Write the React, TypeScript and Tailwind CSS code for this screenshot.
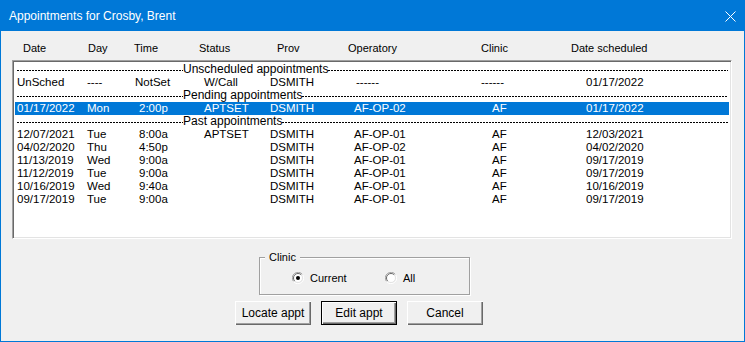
import React from 'react'

type Row = {
  date: string
  day: string
  time: string
  status: string
  prov: string
  op: string
  clinic: string
  sched: string
}

const pending: Row = { date: '01/17/2022', day: 'Mon', time: '2:00p', status: 'APTSET', prov: 'DSMITH', op: 'AF-OP-02', clinic: 'AF', sched: '01/17/2022' }

const past: Row[] = [
  { date: '12/07/2021', day: 'Tue', time: '8:00a', status: 'APTSET', prov: 'DSMITH', op: 'AF-OP-01', clinic: 'AF', sched: '12/03/2021' },
  { date: '04/02/2020', day: 'Thu', time: '4:50p', status: '', prov: 'DSMITH', op: 'AF-OP-02', clinic: 'AF', sched: '04/02/2020' },
  { date: '11/13/2019', day: 'Wed', time: '9:00a', status: '', prov: 'DSMITH', op: 'AF-OP-01', clinic: 'AF', sched: '09/17/2019' },
  { date: '11/12/2019', day: 'Tue', time: '9:00a', status: '', prov: 'DSMITH', op: 'AF-OP-01', clinic: 'AF', sched: '09/17/2019' },
  { date: '10/16/2019', day: 'Wed', time: '9:40a', status: '', prov: 'DSMITH', op: 'AF-OP-01', clinic: 'AF', sched: '10/16/2019' },
  { date: '09/17/2019', day: 'Tue', time: '9:00a', status: '', prov: 'DSMITH', op: 'AF-OP-01', clinic: 'AF', sched: '09/17/2019' },
]

const dashes = 'h-px mt-[7px] bg-[repeating-linear-gradient(to_right,#000_0_2px,transparent_2px_3px)]'

const Separator = ({ label }: { label: string }) => (
  <div className="flex h-[13px] items-start pl-[2px] pr-[1px]">
    <div className={`w-[166px] ${dashes}`} />
    <span className="leading-[13px] text-[12px]">{label}</span>
    <div className={`flex-1 ${dashes}`} />
  </div>
)

const DataRow = ({ row, selected }: { row: Row; selected?: boolean }) => (
  <div className={`flex h-[13px] leading-[13px] whitespace-nowrap pl-[2px] ${selected ? 'bg-[#0078d7] text-white' : ''}`}>
    <span className="w-[70px]">{row.date}</span>
    <span className="w-[52px]">{row.day}</span>
    <span className="w-[65px]">{row.time}</span>
    <span className="w-[66px]">{row.status}</span>
    <span className="w-[84px]">{row.prov}</span>
    <span className="w-[138px]">{row.op}</span>
    <span className="w-[94px]">{row.clinic}</span>
    <span>{row.sched}</span>
  </div>
)

const Radio = ({ checked }: { checked?: boolean }) => (
  <svg width="12" height="12" viewBox="0 0 12 12">
    <path d="M10.5 2.5A5.5 5.5 0 0 0 1.5 9.5" fill="none" stroke="#a0a0a0" />
    <path d="M1.5 9.5A5.5 5.5 0 0 0 10.5 2.5" fill="none" stroke="#ffffff" />
    <circle cx="6" cy="6" r="4.5" fill="#ffffff" />
    <path d="M9.2 2.8A4.5 4.5 0 0 0 2.8 9.2" fill="none" stroke="#696969" />
    <path d="M2.8 9.2A4.5 4.5 0 0 0 9.2 2.8" fill="none" stroke="#e3e3e3" />
    {checked && <circle cx="6" cy="6" r="2" fill="#000" />}
  </svg>
)

const Button = ({ label, isDefault }: { label: string; isDefault?: boolean }) => (
  <button
    className={`w-[76px] h-[24px] bg-[#f0f0f0] text-[12px] text-black ${
      isDefault
        ? 'border border-black shadow-[inset_1px_1px_#fff,inset_-1px_-1px_#696969,inset_-2px_-2px_#a0a0a0]'
        : 'shadow-[inset_1px_1px_#fff,inset_-1px_-1px_#696969,inset_-2px_-2px_#a0a0a0]'
    }`}
  >
    {label}
  </button>
)

export default function App() {
  return (
    <div className="w-[745px] h-[342px] flex flex-col border border-[#0078d7] bg-[#f0f0f0] text-[11px] text-black font-['Liberation_Sans',Arial,sans-serif] overflow-hidden">
      {/* Title bar */}
      <div className="h-[30px] shrink-0 flex items-center justify-between bg-[#0078d7] text-white pl-[8px] pr-[7px]">
        <span className="text-[12px]">Appointments for Crosby, Brent</span>
        <svg width="11" height="11" viewBox="0 0 11 11" className="mr-[1px]">
          <path d="M0.5 0.5L10.5 10.5M10.5 0.5L0.5 10.5" stroke="#fff" strokeWidth="1" />
        </svg>
      </div>

      {/* Column headers */}
      <div className="flex h-[13px] leading-[13px] mt-[11px] pl-[22px] whitespace-nowrap">
        <span className="w-[65px]">Date</span>
        <span className="w-[46px]">Day</span>
        <span className="w-[65px]">Time</span>
        <span className="w-[78px]">Status</span>
        <span className="w-[71px]">Prov</span>
        <span className="w-[133px]">Operatory</span>
        <span className="w-[90px]">Clinic</span>
        <span>Date scheduled</span>
      </div>

      {/* List */}
      <div className="ml-[11px] mt-[5px] w-[720px] h-[179px] bg-white text-[11.5px] border-t border-l border-t-[#a0a0a0] border-l-[#a0a0a0] border-r border-b border-r-white border-b-white shadow-[inset_1px_1px_#696969,inset_-1px_-1px_#e3e3e3] p-[1px]">
        <div className="pt-[1px] pl-[1px] pr-[1px]">
          <Separator label="Unscheduled appointments" />
          <div className="flex h-[13px] leading-[13px] whitespace-nowrap pl-[2px]">
            <span className="w-[70px]">UnSched</span>
            <span className="w-[48px]">----</span>
            <span className="w-[69px]">NotSet</span>
            <span className="w-[66px]">W/Call</span>
            <span className="w-[86px]">DSMITH</span>
            <span className="w-[125px]">------</span>
            <span className="w-[105px]">------</span>
            <span>01/17/2022</span>
          </div>
          <Separator label="Pending appointments" />
          <DataRow row={pending} selected />
          <Separator label="Past appointments" />
          {past.map((r) => (
            <DataRow key={r.date} row={r} />
          ))}
        </div>
      </div>

      {/* Clinic group */}
      <div className="self-start ml-[258px] mt-[18px] w-[211px] h-[38px] border border-[#a0a0a0] shadow-[1px_1px_#fff,inset_1px_1px_#fff] relative">
        <span className="absolute -top-[7px] left-[5px] bg-[#f0f0f0] px-[4px] leading-[13px]">Clinic</span>
        <div className="flex items-center mt-[12px] ml-[32px]">
          <Radio checked />
          <span className="ml-[6px] w-[75px]">Current</span>
          <Radio />
          <span className="ml-[6px]">All</span>
        </div>
      </div>

      {/* Buttons */}
      <div className="flex gap-[10px] ml-[234px] mt-[6px]">
        <Button label="Locate appt" />
        <Button label="Edit appt" isDefault />
        <Button label="Cancel" />
      </div>
    </div>
  )
}
